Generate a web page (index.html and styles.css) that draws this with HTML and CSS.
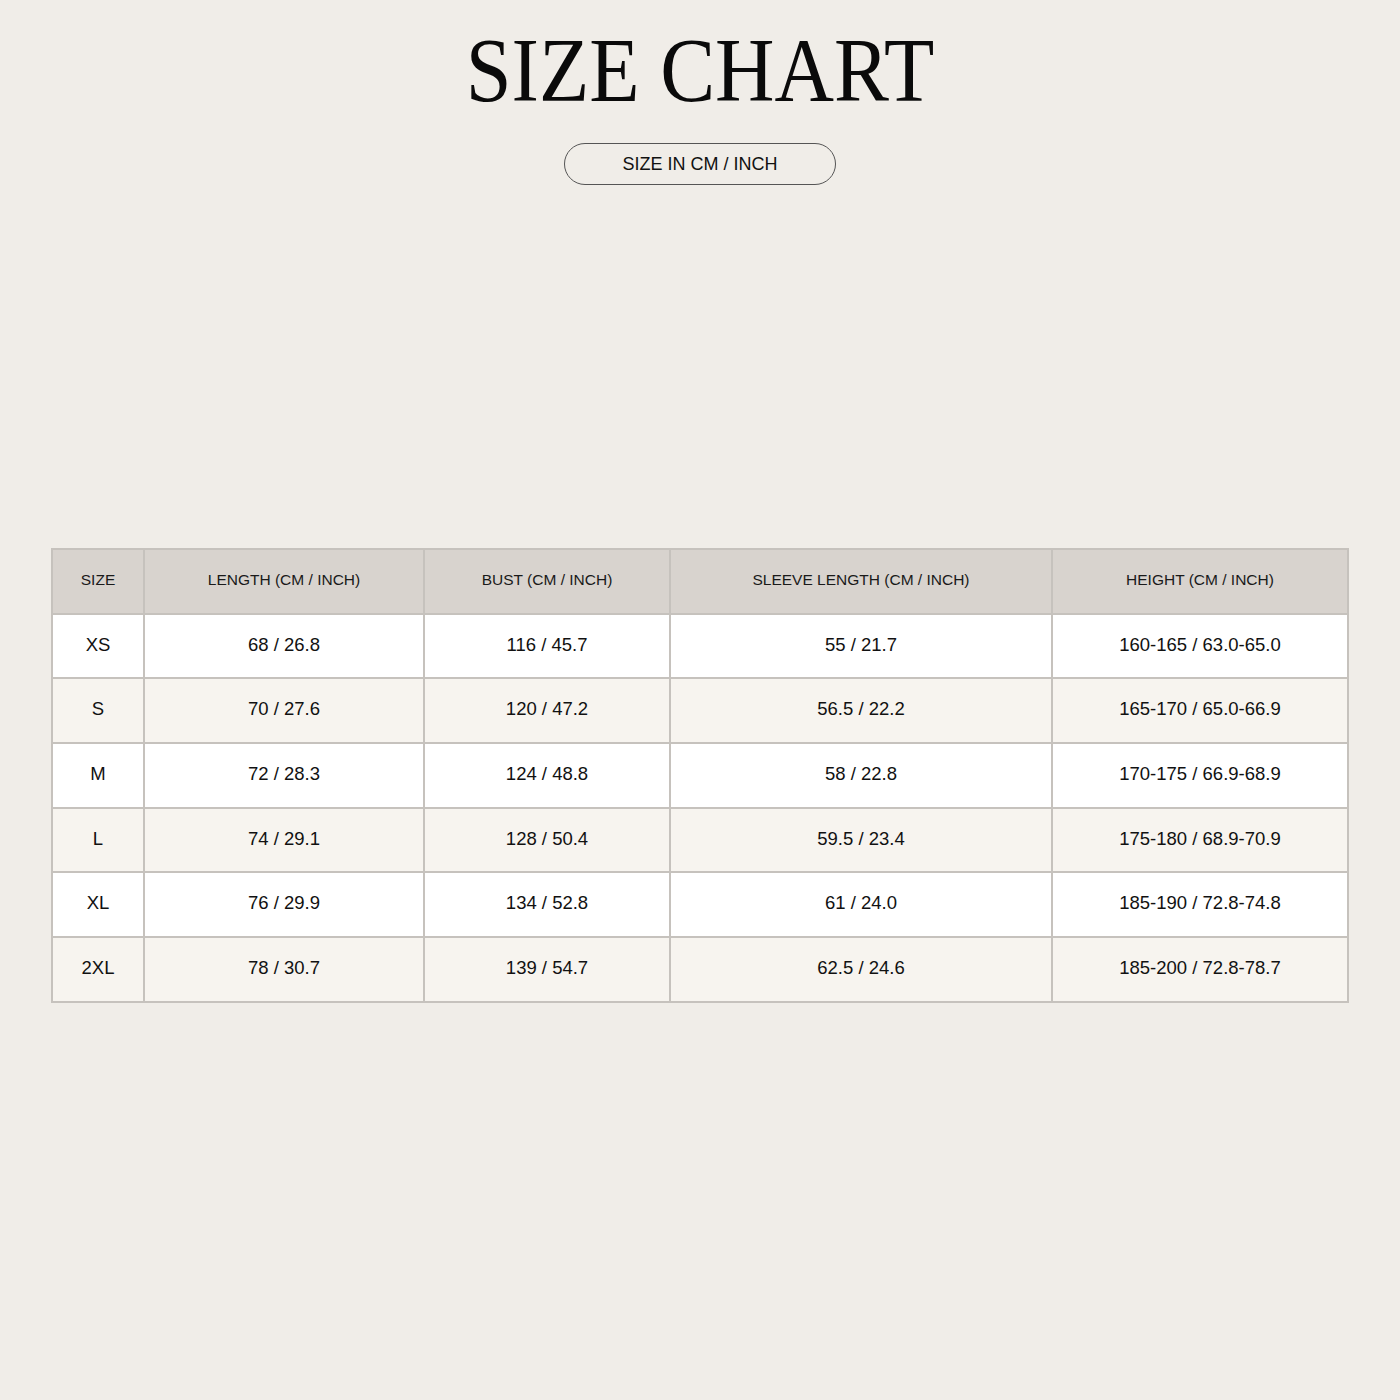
FILE: index.html
```html
<!DOCTYPE html>
<html>
<head>
<meta charset="utf-8">
<link rel="stylesheet" href="styles.css">
</head>
<body>
<div class="page">
  <h1 class="title"><span class="title-text">SIZE CHART</span></h1>
  <div class="pill">SIZE IN CM / INCH</div>
  <table class="chart">
    <colgroup>
      <col class="c1"><col class="c2"><col class="c3"><col class="c4"><col class="c5">
    </colgroup>
    <thead>
      <tr><th>SIZE</th><th>LENGTH (CM / INCH)</th><th>BUST (CM / INCH)</th><th>SLEEVE LENGTH (CM / INCH)</th><th>HEIGHT (CM / INCH)</th></tr>
    </thead>
    <tbody>
      <tr><td>XS</td><td>68 / 26.8</td><td>116 / 45.7</td><td>55 / 21.7</td><td>160-165 / 63.0-65.0</td></tr>
      <tr><td>S</td><td>70 / 27.6</td><td>120 / 47.2</td><td>56.5 / 22.2</td><td>165-170 / 65.0-66.9</td></tr>
      <tr><td>M</td><td>72 / 28.3</td><td>124 / 48.8</td><td>58 / 22.8</td><td>170-175 / 66.9-68.9</td></tr>
      <tr><td>L</td><td>74 / 29.1</td><td>128 / 50.4</td><td>59.5 / 23.4</td><td>175-180 / 68.9-70.9</td></tr>
      <tr><td>XL</td><td>76 / 29.9</td><td>134 / 52.8</td><td>61 / 24.0</td><td>185-190 / 72.8-74.8</td></tr>
      <tr><td>2XL</td><td>78 / 30.7</td><td>139 / 54.7</td><td>62.5 / 24.6</td><td>185-200 / 72.8-78.7</td></tr>
    </tbody>
  </table>
</div>
</body>
</html>
```
FILE: styles.css
```css
html, body {
  margin: 0;
  padding: 0;
  background: #f0ede8;
}
.page {
  width: 1400px;
  height: 1400px;
  display: flex;
  flex-direction: column;
  align-items: center;
  font-family: "Liberation Sans", Arial, sans-serif;
  color: #111;
}
.title {
  margin: 21px 0 0 0;
  height: 100px;
  font-family: "Liberation Serif", "Times New Roman", serif;
  font-weight: 400;
  font-size: 90px;
  line-height: 100px;
  color: #0a0a0a;
}
.title-text {
  display: inline-block;
  transform: scaleX(0.915);
}
.pill {
  margin-top: 22px;
  width: 270px;
  height: 40px;
  border: 1px solid #555;
  border-radius: 21px;
  display: flex;
  align-items: center;
  justify-content: center;
  font-size: 18px;
  color: #111;
}
.chart {
  margin-top: 363px;
  width: 1296px;
  border-collapse: collapse;
  table-layout: fixed;
  border: 2px solid #c6c2bd;
}
.c1 { width: 92px; }
.c2 { width: 280px; }
.c3 { width: 246px; }
.c4 { width: 382px; }
.c5 { width: 296px; }
.chart th, .chart td {
  border: 2px solid #c6c2bd;
  height: 59.7px;
  padding: 0 0 3px 0;
  text-align: center;
  vertical-align: middle;
}
.chart th {
  background: #d8d3ce;
  font-weight: 400;
  font-size: 15.5px;
  color: #1a1a1a;
}
.chart td {
  font-size: 18.5px;
  color: #111;
}
.chart tbody tr:nth-child(odd) td { background: #ffffff; }
.chart tbody tr:nth-child(even) td { background: #f7f4ef; }
```
